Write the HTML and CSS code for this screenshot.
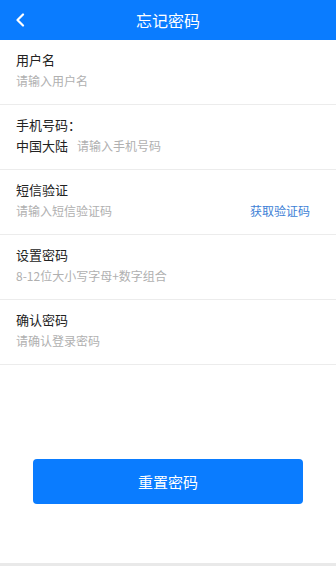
FILE: index.html
```html
<!DOCTYPE html>
<html lang="zh-CN">
<head>
<meta charset="utf-8">
<title>忘记密码</title>
<link rel="stylesheet" href="styles.css">
</head>
<body>
<div class="page">
  <header class="topbar">
    <span class="back">
      <svg width="10" height="14" viewBox="0 0 10 14"><path d="M8 1.5 L2.5 7 L8 12.5" fill="none" stroke="#fff" stroke-width="2.2" stroke-linecap="round" stroke-linejoin="round"/></svg>
    </span>
    <h1 class="title">忘记密码</h1>
  </header>
  <main class="form">
    <div class="row">
      <div class="label">用户名</div>
      <div class="field"><span class="ph">请输入用户名</span></div>
    </div>
    <div class="row">
      <div class="label">手机号码：</div>
      <div class="field"><span class="region">中国大陆</span><span class="ph">请输入手机号码</span></div>
    </div>
    <div class="row">
      <div class="label">短信验证</div>
      <div class="field"><span class="ph grow">请输入短信验证码</span><span class="getcode">获取验证码</span></div>
    </div>
    <div class="row">
      <div class="label">设置密码</div>
      <div class="field"><span class="ph">8-12位大小写字母+数字组合</span></div>
    </div>
    <div class="row">
      <div class="label">确认密码</div>
      <div class="field"><span class="ph">请确认登录密码</span></div>
    </div>
    <div class="actions">
      <button class="submit">重置密码</button>
    </div>
  </main>
</div>
</body>
</html>
```
FILE: styles.css
```css
* { box-sizing: border-box; }
html, body { margin: 0; padding: 0; }
body {
  background: #e9e9e9;
  font-family: "Noto Sans CJK SC", "Noto Sans", "Liberation Sans", sans-serif;
  color: #222;
}
.page {
  background: #fff;
  height: 563px;
  overflow: hidden;
}
.topbar {
  height: 40px;
  background: #0a7cff;
  display: flex;
  align-items: center;
  justify-content: center;
  position: relative;
}
.back {
  position: absolute;
  left: 15px;
  top: 13px;
  width: 10px;
  height: 14px;
  display: flex;
}
.title {
  margin: 0;
  color: #fff;
  font-size: 16px;
  font-weight: normal;
  line-height: 40px;
}
.row {
  padding: 11px 16px 14px;
  border-bottom: 1px solid #ececec;
  height: 65px;
}
.label {
  font-size: 13px;
  line-height: 18px;
  color: #222;
}
.field {
  margin-top: 3px;
  display: flex;
  align-items: center;
  line-height: 18px;
  font-size: 12px;
}
.ph { color: #b0b0b0; }
.grow { flex: 1; }
.region {
  font-size: 13px;
  color: #222;
  margin-right: 9px;
}
.getcode {
  color: #3d7fd6;
  margin-right: 10px;
}
.actions {
  padding: 94px 33px 0;
}
.submit {
  display: block;
  width: 100%;
  height: 45px;
  border: 0;
  border-radius: 4px;
  background: #0a7cff;
  color: #fff;
  font-family: inherit;
  font-size: 15px;
}
```
